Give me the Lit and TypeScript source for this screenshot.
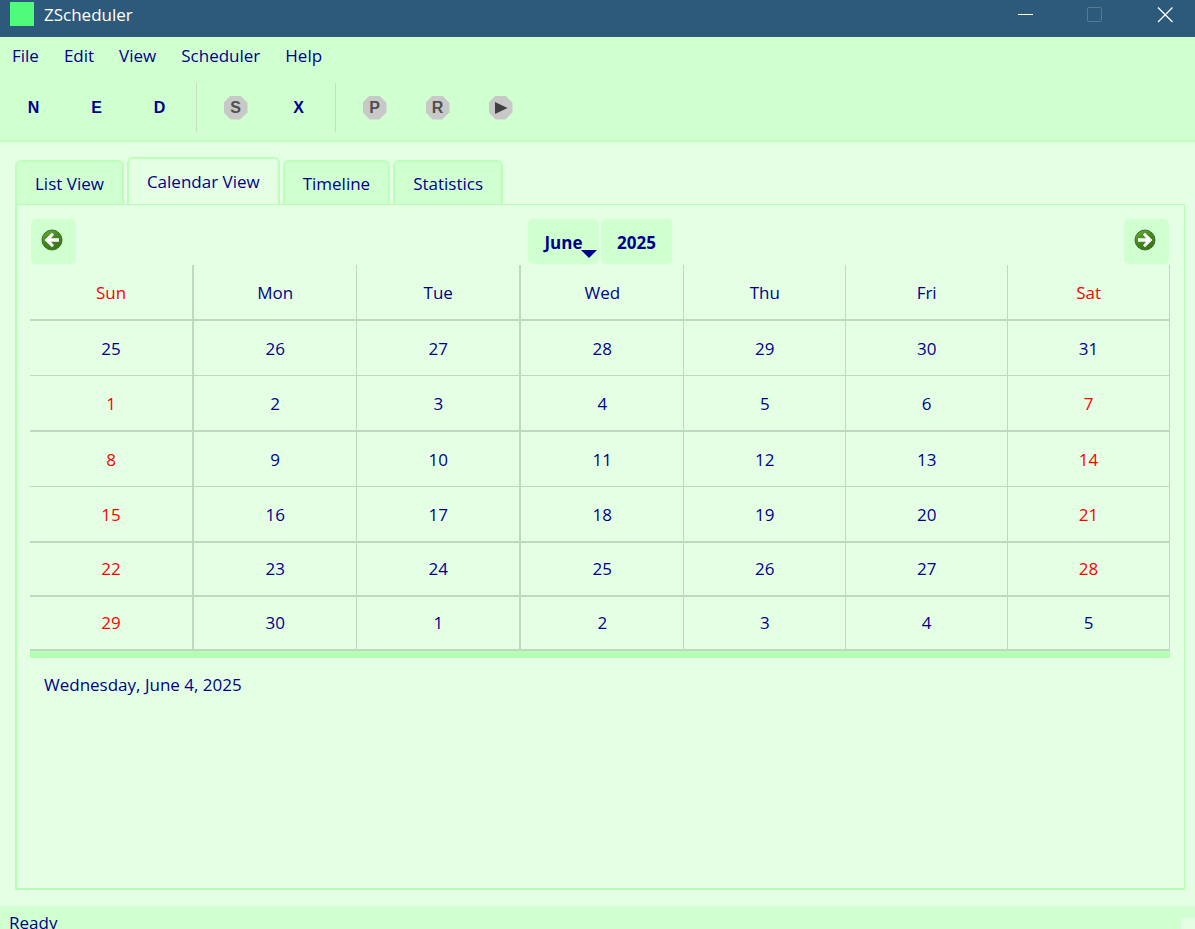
import { LitElement, html, css, svg } from "lit";
import { customElement, state } from "lit/decorators.js";
import { classMap } from "lit/directives/class-map.js";

const MENUS = ["File", "Edit", "View", "Scheduler", "Help"];
const TABS = ["List View", "Calendar View", "Timeline", "Statistics"];
const WEEKDAYS = ["Sun", "Mon", "Tue", "Wed", "Thu", "Fri", "Sat"];

interface Tool {
  glyph: string;
  label: string;
  disabled?: boolean;
}

const TOOL_GROUPS: Tool[][] = [
  [
    { glyph: "N", label: "New" },
    { glyph: "E", label: "Edit" },
    { glyph: "D", label: "Delete" },
  ],
  [
    { glyph: "S", label: "Start", disabled: true },
    { glyph: "X", label: "Stop" },
  ],
  [
    { glyph: "P", label: "Pause", disabled: true },
    { glyph: "R", label: "Resume", disabled: true },
    { glyph: "play", label: "Run", disabled: true },
  ],
];

interface Day {
  date: number;
  inMonth: boolean;
}

function monthGrid(year: number, month: number): Day[][] {
  const lead = new Date(year, month, 1).getDay() || 7;
  return Array.from({ length: 6 }, (_, w) =>
    Array.from({ length: 7 }, (_, d) => {
      const day = new Date(year, month, 1 - lead + w * 7 + d);
      return { date: day.getDate(), inMonth: day.getMonth() === month };
    })
  );
}

@customElement("app-root")
export class AppRoot extends LitElement {
  @state() private activeTab = 1;

  static styles = css`
    :host {
      display: flex;
      flex-direction: column;
      height: 100vh;
      overflow: hidden;
      background: #e5ffe5;
      color: #00008b;
      font: 17px/24px "Open Sans", "Noto Sans", sans-serif;
    }
    * {
      box-sizing: border-box;
    }
    button {
      margin: 0;
      padding: 0;
      border: 0;
      background: none;
      color: inherit;
      font: inherit;
    }
    svg {
      display: block;
    }
    .titlebar {
      flex: none;
      display: flex;
      gap: 10px;
      height: 37px;
      padding-left: 10px;
      background: #2d5a7b;
      color: #fff;
    }
    .app-icon {
      width: 24px;
      height: 24px;
      margin-top: 2px;
      background: #50fa7b;
    }
    .title {
      flex: 1;
      margin: 0;
      padding-top: 3px;
      font-size: 17px;
      font-weight: 400;
    }
    .window-button {
      display: flex;
      justify-content: center;
      width: 60px;
      height: 29px;
      align-items: center;
    }
    .chrome {
      flex: none;
      background: #d0ffd0;
      border-bottom: 2px solid #bbffbb;
    }
    .menubar {
      display: flex;
      gap: 25px;
      height: 37px;
      padding: 0 12px;
      align-items: center;
    }
    .toolbar {
      display: flex;
      align-items: center;
      height: 66px;
      padding-left: 2px;
    }
    .tool {
      display: flex;
      align-items: center;
      justify-content: center;
      width: 63px;
      height: 49px;
      padding-top: 1px;
      font: bold 16px/24px "Liberation Sans", Arial, sans-serif;
    }
    .badge {
      width: 24px;
      height: 24px;
      display: grid;
      place-items: center;
    }
    .disabled {
      background: #c8c8c8;
      color: #505050;
      clip-path: polygon(30% 0, 70% 0, 100% 30%, 100% 70%, 70% 100%, 30% 100%, 0 70%, 0 30%);
    }
    .separator {
      width: 1px;
      height: 49px;
      margin: 0 7px 0 5px;
      background: #c8dcc8;
    }
    .main {
      flex: 1;
      min-height: 0;
      display: flex;
      flex-direction: column;
      padding: 15px 10px 16px 15px;
    }
    .tabs {
      display: flex;
      align-items: flex-end;
      gap: 3px;
      height: 47px;
    }
    .tab {
      height: 44px;
      padding: 2px 18px 0;
      border: 2px solid #bbffbb;
      border-bottom: 0;
      border-radius: 6px 6px 0 0;
      background: #d0ffd0;
    }
    .tab.active {
      height: 47px;
      padding-top: 0;
      background: #e5ffe5;
    }
    .pane {
      flex: 1;
      min-height: 0;
      padding: 14px 14px 0 13px;
      border: solid #b3ffb3;
      border-width: 1px 1px 2px 2px;
    }
    .navbar {
      display: flex;
      justify-content: space-between;
      height: 46px;
      padding: 0 1px;
    }
    .nav-button {
      width: 45px;
      height: 45px;
      padding: 0 3px 3px 0;
      border-radius: 5px;
      background: #d0ffd0;
      display: grid;
      place-items: center;
    }
    .period {
      display: flex;
      gap: 2px;
    }
    .period-button {
      position: relative;
      width: 71px;
      height: 45px;
      padding-top: 2px;
      border-radius: 5px;
      background: #d0ffd0;
      font-weight: 700;
    }
    .caret {
      position: absolute;
      right: 2px;
      bottom: 6px;
      border: 8px solid transparent;
      border-top-color: #00008b;
      border-bottom: 0;
    }
    .calendar {
      width: 100%;
      table-layout: fixed;
      border-collapse: separate;
      border-spacing: 0;
      border-bottom: 7px solid #b3ffb3;
    }
    .col-wide {
      width: 14.4%;
    }
    .col-mid {
      width: 14.3%;
    }
    .calendar th,
    .calendar td {
      height: 55px;
      padding: 2px 0 0;
      border: solid #c0d8c0;
      border-width: 0 1px 1px 0;
      font-weight: 400;
      text-align: center;
    }
    .calendar th,
    .calendar .thick td {
      height: 56px;
      border-bottom-width: 2px;
    }
    .calendar .late td {
      height: 54px;
      padding-top: 0;
      border-bottom-width: 2px;
    }
    .calendar tr > :nth-child(1),
    .calendar tr > :nth-child(3) {
      border-right-width: 2px;
    }
    .calendar .weekend {
      color: #f00;
    }
    .selected-date {
      margin: 0;
      padding: 15px 14px;
    }
    .statusbar {
      flex: none;
      display: flex;
      justify-content: space-between;
      align-items: flex-end;
      height: 23px;
      padding-left: 9px;
      overflow: hidden;
      background: #d0ffd0;
      line-height: 34px;
    }
    .status-text {
      align-self: flex-start;
    }
    .grip {
      width: 14px;
      height: 11px;
      background: #e5ffe5;
    }
  `;

  private arrow(direction: "left" | "right") {
    const shape =
      direction === "left"
        ? svg`<path d="M3.6 11 L11 3.8 L13 5.8 L10 9.2 H18 V12.8 H10 L13 16.2 L11 18.2 Z" fill="#fff"/>`
        : svg`<path d="M18.4 11 L11 3.8 L9 5.8 L12 9.2 H4 V12.8 H12 L9 16.2 L11 18.2 Z" fill="#fff"/>`;
    return html`<svg width="22" height="22" viewBox="0 0 22 22" aria-hidden="true">
      <defs>
        <linearGradient id="ball" x1="0" y1="0" x2="0.6" y2="1">
          <stop offset="0" stop-color="#74b040" />
          <stop offset="0.5" stop-color="#438a20" />
          <stop offset="1" stop-color="#3a7416" />
        </linearGradient>
      </defs>
      <circle cx="11" cy="11" r="10" fill="url(#ball)" stroke="#3c7024" stroke-width="1" />
      ${shape}
    </svg>`;
  }

  private tool(t: Tool) {
    return html`<button class="tool" aria-label=${t.label} ?disabled=${t.disabled}>
      <span class=${classMap({ badge: true, disabled: !!t.disabled })}>
        ${t.glyph === "play"
          ? html`<svg width="24" height="24" viewBox="0 0 24 24"><path d="M6 6 L18.5 12 L6 18 Z" fill="#404040" /></svg>`
          : t.glyph}
      </span>
    </button>`;
  }

  private weekClass(index: number) {
    return classMap({ thick: index === 1 || index === 3, late: index > 3 });
  }

  render() {
    return html`
      <header class="titlebar">
        <span class="app-icon"></span>
        <h1 class="title">ZScheduler</h1>
        <button class="window-button" aria-label="Minimize">
          <svg width="16" height="16" viewBox="0 0 16 16"><path d="M1 7.5H16" stroke="#fff" /></svg>
        </button>
        <button class="window-button" aria-label="Maximize" disabled>
          <svg width="16" height="16" viewBox="0 0 16 16"><rect x="0.5" y="0.5" width="14" height="14" rx="1" fill="none" stroke="#577b95" /></svg>
        </button>
        <button class="window-button" aria-label="Close">
          <svg width="16" height="16" viewBox="0 0 16 16"><path d="M1 0.5L15.5 15M15.5 0.5L1 15" stroke="#fff" stroke-width="1.3" /></svg>
        </button>
      </header>
      <div class="chrome">
        <nav class="menubar">${MENUS.map((m) => html`<button>${m}</button>`)}</nav>
        <div class="toolbar" role="toolbar">
          ${TOOL_GROUPS.map(
            (group, i) => html`${i ? html`<span class="separator"></span>` : ""}${group.map((t) => this.tool(t))}`
          )}
        </div>
      </div>
      <main class="main">
        <div class="tabs" role="tablist">
          ${TABS.map(
            (name, i) => html`<button
              role="tab"
              aria-selected=${i === this.activeTab}
              class=${classMap({ tab: true, active: i === this.activeTab })}
              @click=${() => (this.activeTab = i)}
            >${name}</button>`
          )}
        </div>
        <section class="pane">
          <div class="navbar">
            <button class="nav-button" aria-label="Previous month">${this.arrow("left")}</button>
            <div class="period">
              <button class="period-button">June<span class="caret"></span></button>
              <button class="period-button">2025</button>
            </div>
            <button class="nav-button" aria-label="Next month">${this.arrow("right")}</button>
          </div>
          <table class="calendar">
            <colgroup>
              <col class="col-wide" /><col class="col-mid" /><col class="col-wide" /><col class="col-mid" />
              <col /><col /><col />
            </colgroup>
            <thead>
              <tr>
                ${WEEKDAYS.map(
                  (d, i) => html`<th scope="col" class=${classMap({ weekend: i % 6 === 0 })}>${d}</th>`
                )}
              </tr>
            </thead>
            <tbody>
              ${monthGrid(2025, 5).map(
                (week, w) => html`<tr class=${this.weekClass(w)}>
                  ${week.map(
                    (day, d) => html`<td class=${classMap({ weekend: day.inMonth && d % 6 === 0 })}>${day.date}</td>`
                  )}
                </tr>`
              )}
            </tbody>
          </table>
          <p class="selected-date">Wednesday, June 4, 2025</p>
        </section>
      </main>
      <footer class="statusbar">
        <span class="status-text">Ready</span>
        <span class="grip"></span>
      </footer>
    `;
  }
}
